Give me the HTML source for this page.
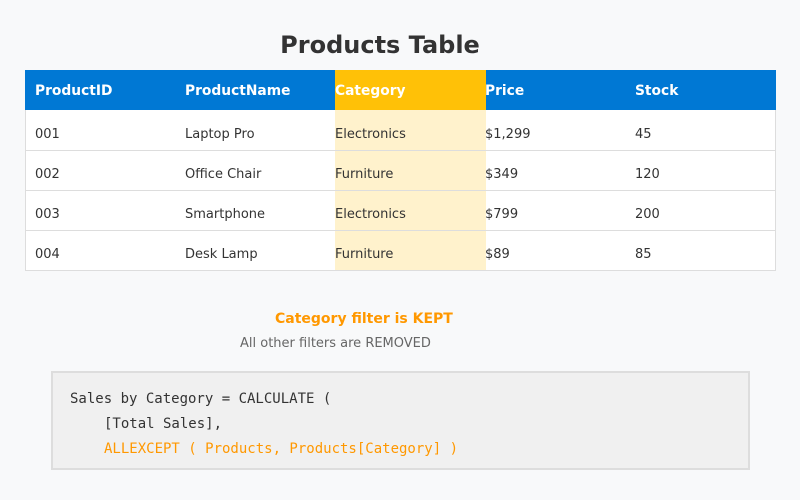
<!DOCTYPE html>
<html><head><meta charset="utf-8"><style>
*{margin:0;padding:0;box-sizing:border-box}
body{width:800px;height:500px;background:#f8f9fa;font-family:"DejaVu Sans","Liberation Sans",sans-serif;position:relative;overflow:hidden;color:#333}
.a{position:absolute;white-space:pre}
.title{left:0;width:760px;text-align:center;top:31px;font-size:24px;font-weight:bold;color:#333}
.tbl{position:absolute;left:25px;top:70px;width:751px;height:201px;background:#fff;border:1px solid #ddd;border-top:none}
.hdr{position:absolute;left:25px;top:70px;width:751px;height:40px;background:#0078d4}
.cat{position:absolute;left:335px;top:70px;width:151px;height:40px;background:#ffc107}
.catb{position:absolute;left:335px;top:110px;width:151px;height:160px;background:#fff2cc}
.line{position:absolute;left:25px;width:751px;height:1px;background:#ddd}
.h{font-size:13.8px;font-weight:bold;color:#fff;top:83px}
.c{font-size:13px;color:#333}
.code{position:absolute;left:51px;top:371px;width:699px;height:99px;background:#f0f0f0;border:2px solid #ddd}
.m{font-family:"DejaVu Sans Mono","Liberation Mono",monospace;font-size:14px;color:#333}
</style></head><body>
<div class="a title">Products Table</div>
<div class="tbl"></div>
<div class="catb"></div>
<div class="hdr"></div>
<div class="cat"></div>
<div class="line" style="top:150px"></div>
<div class="line" style="top:190px"></div>
<div class="line" style="top:230px"></div>
<div class="a h" style="left:35px">ProductID</div>
<div class="a h" style="left:185px">ProductName</div>
<div class="a h" style="left:335px">Category</div>
<div class="a h" style="left:485px">Price</div>
<div class="a h" style="left:635px">Stock</div>

<div class="a c" style="left:35px;top:127px">001</div><div class="a c" style="left:185px;top:127px">Laptop Pro</div><div class="a c" style="left:335px;top:127px">Electronics</div><div class="a c" style="left:485px;top:127px">$1,299</div><div class="a c" style="left:635px;top:127px">45</div>
<div class="a c" style="left:35px;top:167px">002</div><div class="a c" style="left:185px;top:167px">Office Chair</div><div class="a c" style="left:335px;top:167px">Furniture</div><div class="a c" style="left:485px;top:167px">$349</div><div class="a c" style="left:635px;top:167px">120</div>
<div class="a c" style="left:35px;top:207px">003</div><div class="a c" style="left:185px;top:207px">Smartphone</div><div class="a c" style="left:335px;top:207px">Electronics</div><div class="a c" style="left:485px;top:207px">$799</div><div class="a c" style="left:635px;top:207px">200</div>
<div class="a c" style="left:35px;top:247px">004</div><div class="a c" style="left:185px;top:247px">Desk Lamp</div><div class="a c" style="left:335px;top:247px">Furniture</div><div class="a c" style="left:485px;top:247px">$89</div><div class="a c" style="left:635px;top:247px">85</div>

<div class="a" style="left:275px;top:311px;font-size:14px;font-weight:bold;color:#ff9800">Category filter is KEPT</div>
<div class="a" style="left:240px;top:336px;font-size:13px;color:#666">All other filters are REMOVED</div>

<div class="code"></div>
<div class="a m" style="left:70px;top:391px">Sales by Category = CALCULATE (</div>
<div class="a m" style="left:104px;top:416px">[Total Sales],</div>
<div class="a m" style="left:104px;top:441px;color:#ff9800">ALLEXCEPT ( Products, Products[Category] )</div>
</body></html>
